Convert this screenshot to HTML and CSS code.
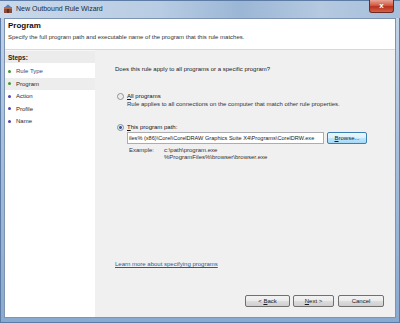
FILE: index.html
```html
<!DOCTYPE html>
<html lang="en">
<head>
  <meta charset="UTF-8">
  <title>New Outbound Rule Wizard</title>
  <link rel="stylesheet" href="styles.css">
</head>
<body>
  <div class="window">
    <div class="titlebar">
      <svg class="app-icon" width="10" height="10" viewBox="0 0 10 10">
        <rect x="1" y="3" width="8" height="6" fill="#8a4b3a"/>
        <rect x="1" y="3" width="8" height="2" fill="#b86b4f"/>
        <path d="M2 3 L5 0.5 L8 3 Z" fill="#4a7fc0"/>
        <rect x="4" y="5" width="2" height="4" fill="#5a2f22"/>
      </svg>
      <span class="title">New Outbound Rule Wizard</span>
      <div class="close-btn">x</div>
    </div>

    <div class="client">
      <div class="wizard-header">
        <h1 class="page-title">Program</h1>
        <p class="page-desc">Specify the full program path and executable name of the program that this rule matches.</p>
      </div>

      <div class="wizard-body">
        <aside class="steps">
          <div class="steps-title">Steps:</div>
          <ul class="step-list">
            <li class="step done"><span class="dot green"></span>Rule Type</li>
            <li class="step current"><span class="dot green"></span>Program</li>
            <li class="step"><span class="dot blue"></span>Action</li>
            <li class="step"><span class="dot blue"></span>Profile</li>
            <li class="step"><span class="dot blue"></span>Name</li>
          </ul>
        </aside>

        <section class="content">
          <p class="question">Does this rule apply to all programs or a specific program?</p>

          <div class="option">
            <span class="radio"></span>
            <div>
              <div class="option-label"><u>A</u>ll programs</div>
              <div class="option-desc">Rule applies to all connections on the computer that match other rule properties.</div>
            </div>
          </div>

          <div class="option option-path">
            <span class="radio checked"></span>
            <div class="path-block">
              <div class="option-label"><u>T</u>his program path:</div>
              <div class="path-row">
                <div class="path-input">iles% (x86)\Corel\CorelDRAW Graphics Suite X4\Programs\CorelDRW.exe</div>
                <div class="btn browse-btn"><u>B</u>rowse...</div>
              </div>
              <div class="example">
                <span class="example-label">Example:</span>
                <span class="example-values">c:\path\program.exe<br>%ProgramFiles%\browser\browser.exe</span>
              </div>
            </div>
          </div>

          <a class="learn-link" href="#">Learn more about specifying programs</a>

          <div class="buttons">
            <div class="btn">&lt; <u>B</u>ack</div>
            <div class="btn next-btn"><u>N</u>ext &gt;</div>
            <div class="btn cancel-btn">Cancel</div>
          </div>
        </section>
      </div>
    </div>
  </div>
</body>
</html>
```

FILE: styles.css
```css
* {
  margin: 0;
  padding: 0;
  box-sizing: border-box;
}

body {
  font-family: 'Liberation Sans', Arial, sans-serif;
  font-size: 6px;
  color: #1e1e1e;
  background: #ffffff;
}

.window {
  width: 400px;
  height: 323px;
  display: flex;
  flex-direction: column;
  padding: 0 4px 5px 4px;
  background: linear-gradient(180deg, #c4d5e8 0%, #a9c1dd 40%, #8aa9cf 100%);
  box-shadow: inset 0 0 0 1px #5c7ca6;
}

.titlebar {
  height: 18px;
  display: flex;
  align-items: flex-start;
  background: linear-gradient(90deg, #c9d8ea 0%, #b8cce3 40%, #9bb6d6 60%, #b5c9e0 80%, #a6bfdc 100%);
  margin: 0 -4px;
  padding: 0 6px 0 3px;
  border-top: 1px solid #5c7ca6;
}

.app-icon {
  margin-top: 3px;
}

.title {
  font-size: 7px;
  color: #1c2a3a;
  margin: 4px 0 0 3px;
}

.close-btn {
  margin-left: auto;
  width: 25px;
  height: 13px;
  margin-top: -1px;
  background: linear-gradient(180deg, #e9a597 0%, #d05a45 45%, #b8321e 55%, #d4624a 100%);
  border: 1px solid #6d2a22;
  border-top: none;
  border-radius: 0 0 3px 3px;
  color: #ffffff;
  font-size: 8px;
  font-weight: bold;
  text-align: center;
  line-height: 11px;
}

.client {
  flex: 1;
  display: flex;
  flex-direction: column;
  background: #ffffff;
  border: 1px solid #7d93b2;
}

.wizard-header {
  height: 31px;
  padding: 1px 0 0 3px;
  border-bottom: 1px solid #d9d9d9;
}

.page-title {
  font-size: 8px;
  font-weight: bold;
  color: #111111;
  line-height: 10px;
  margin-top: 1px;
}

.page-desc {
  margin-top: 2px;
  color: #333333;
  line-height: 8px;
}

.wizard-body {
  flex: 1;
  display: flex;
}

.steps {
  width: 90px;
  background: #ffffff;
}

.steps-title {
  height: 13px;
  padding: 3px 0 0 3px;
  background: #ececec;
  border-top: 1px solid #f6f6f6;
  font-weight: bold;
  font-size: 6.5px;
}

.step-list {
  list-style: none;
  margin-top: 2px;
}

.step {
  display: flex;
  align-items: center;
  height: 12.5px;
  padding-left: 3px;
  color: #2a2a2a;
}

.step.done {
  color: #2b4a8a;
}

.step.current {
  background: #ededed;
}

.dot {
  width: 3px;
  height: 3px;
  border-radius: 50%;
  margin-right: 5px;
}

.dot.green {
  background: #3c9d2e;
}

.dot.blue {
  background: #4d46b8;
}

.content {
  flex: 1;
  display: flex;
  flex-direction: column;
  background: #f0f0f0;
  padding: 16px 11px 10px 20px;
}

.question {
  color: #222222;
}

.option {
  display: flex;
  align-items: flex-start;
  margin-top: 20px;
}

.option-path {
  margin-top: 16px;
}

.radio {
  width: 7px;
  height: 7px;
  border-radius: 50%;
  border: 1px solid #8e8f8f;
  background: radial-gradient(circle, #e6e6e6 0%, #f8f8f8 100%);
  margin: 1px 3px 0 2px;
  flex-shrink: 0;
}

.radio.checked {
  background: radial-gradient(circle, #2b5fa8 0%, #2b5fa8 35%, #dfe9f5 45%, #f4f4f4 100%);
}

.option-label {
  color: #111111;
  line-height: 8px;
}

.option-desc {
  margin-top: 1px;
  color: #333333;
}

.path-block {
  flex: 1;
}

.path-row {
  display: flex;
  align-items: center;
  margin-top: 1px;
}

.path-input {
  width: 197px;
  height: 12px;
  padding: 2px 0 0 1px;
  background: #ffffff;
  border: 1px solid #abadb3;
  white-space: nowrap;
  overflow: hidden;
  color: #222222;
  font-size: 5.6px;
}

.btn {
  width: 45px;
  height: 12px;
  border: 1px solid #707070;
  border-radius: 2px;
  background: linear-gradient(180deg, #f2f2f2 0%, #ebebeb 50%, #dddddd 51%, #cfcfcf 100%);
  text-align: center;
  line-height: 10px;
  color: #1a1a1a;
}

.browse-btn {
  width: 40px;
  margin-left: 3px;
  border-color: #3c7fb1;
  background: linear-gradient(180deg, #eaf6fd 0%, #d9f0fc 50%, #bee6fd 51%, #a7d9f5 100%);
}

.example {
  display: flex;
  margin-top: 3px;
  padding-left: 2px;
  line-height: 7px;
  color: #333333;
}

.example-label {
  width: 35px;
}

.learn-link {
  margin-top: auto;
  margin-bottom: 28px;
  color: #2a5a9c;
  text-decoration: underline;
}

.buttons {
  display: flex;
  justify-content: flex-end;
  gap: 3px;
}

.next-btn {
  width: 41px;
}

.cancel-btn {
  margin-left: 1px;
  width: 46px;
}
```
